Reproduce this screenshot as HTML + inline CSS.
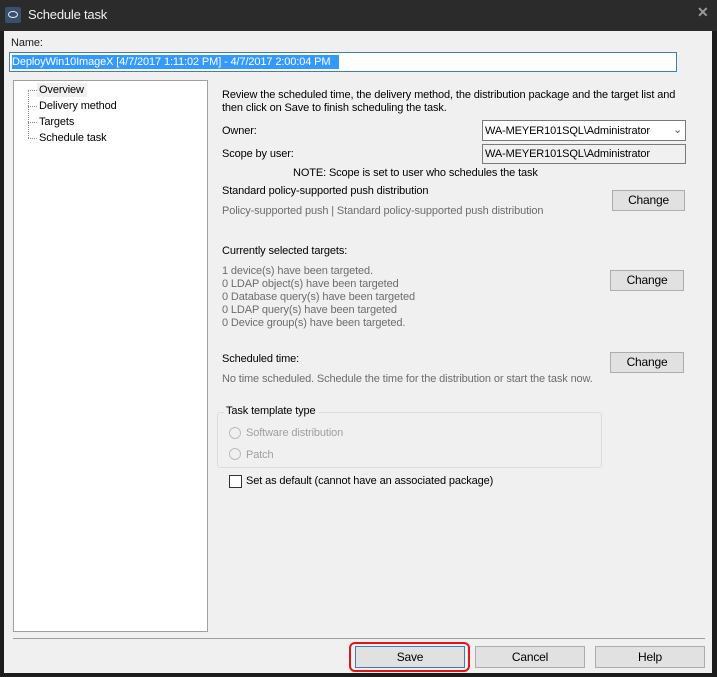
<!DOCTYPE html>
<html><head><style>
*{margin:0;padding:0;box-sizing:border-box}
body{width:717px;height:677px;background:#1c1c1c;font-family:"Liberation Sans",sans-serif;font-size:11px;letter-spacing:-0.12px;color:#000;position:relative;overflow:hidden}
.a{position:absolute;white-space:nowrap}
.g{color:#6d6d6d}
.btn{position:absolute;background:#e1e1e1;border:1px solid #adadad;text-align:center;font-size:12px;letter-spacing:-0.2px}
</style></head><body>
<div class="a" style="left:0;top:0;width:717px;height:31px;background:#2b2b2b"></div>
<div class="a" style="left:5px;top:7px;width:16px;height:16px;background:#3a4e6e;border-radius:2px"></div>
<div class="a" style="left:8px;top:11px;width:10px;height:7px;border:1.5px solid #e8eef8;border-radius:50%"></div>
<div class="a" style="left:28px;top:7px;color:#f0f0f0;font-size:13px;letter-spacing:-0.2px">Schedule task</div>
<div class="a" style="left:697px;top:4px;color:#9a9a9a;font-size:14px;font-weight:bold">✕</div>
<div class="a" style="left:4px;top:31px;width:708px;height:642px;background:#f0f0f0"></div>
<div class="a" style="left:11px;top:37px;color:#1a1a1a">Name:</div>
<div class="a" style="left:9px;top:52px;width:668px;height:20px;background:#fff;border:1px solid #3c7fb1"></div>
<div class="a" style="left:12px;top:55px;height:14px;width:327px;background:#3399ff"></div>
<div class="a" style="left:12px;top:55px;color:#fff;line-height:14px">DeployWin10ImageX [4/7/2017 1:11:02 PM] - 4/7/2017 2:00:04 PM</div>
<div class="a" style="left:13px;top:80px;width:195px;height:552px;background:#fff;border:1px solid #a0a0a0"></div>
<div class="a" style="left:28px;top:90px;width:1px;height:48px;border-left:1px dotted #888"></div>
<div class="a" style="left:28px;top:90px;width:9px;border-top:1px dotted #888"></div>
<div class="a" style="left:28px;top:106px;width:9px;border-top:1px dotted #888"></div>
<div class="a" style="left:28px;top:122px;width:9px;border-top:1px dotted #888"></div>
<div class="a" style="left:28px;top:138px;width:9px;border-top:1px dotted #888"></div>
<div class="a" style="left:37px;top:83px;width:50px;height:14px;background:#f0f0f0"></div>
<div class="a" style="left:39px;top:84px">Overview</div>
<div class="a" style="left:39px;top:100px">Delivery method</div>
<div class="a" style="left:39px;top:116px">Targets</div>
<div class="a" style="left:39px;top:132px">Schedule task</div>
<div class="a" style="left:222px;top:89px">Review the scheduled time, the delivery method, the distribution package and the target list and</div>
<div class="a" style="left:222px;top:102px">then click on Save to finish scheduling the task.</div>
<div class="a" style="left:222px;top:125px">Owner:</div>
<div class="a" style="left:482px;top:120px;width:204px;height:21px;background:#fff;border:1px solid #7a7a7a"></div>
<div class="a" style="left:485px;top:125px">WA-MEYER101SQL\Administrator</div>
<div class="a" style="left:673px;top:123px;color:#555;font-size:11px">⌄</div>
<div class="a" style="left:222px;top:148px">Scope by user:</div>
<div class="a" style="left:482px;top:144px;width:204px;height:20px;background:#f0f0f0;border:1px solid #7a7a7a"></div>
<div class="a" style="left:485px;top:148px">WA-MEYER101SQL\Administrator</div>
<div class="a" style="left:293px;top:167px">NOTE: Scope is set to user who schedules the task</div>
<div class="a" style="left:222px;top:185px">Standard policy-supported push distribution</div>
<div class="a g" style="left:222px;top:205px">Policy-supported push | Standard policy-supported push distribution</div>
<div class="btn" style="left:612px;top:190px;width:73px;height:21px;line-height:19px">Change</div>
<div class="a" style="left:222px;top:245px">Currently selected targets:</div>
<div class="a g" style="left:222px;top:265px;line-height:13px">1 device(s) have been targeted.<br>0 LDAP object(s) have been targeted<br>0 Database query(s) have been targeted<br>0 LDAP query(s) have been targeted<br>0 Device group(s) have been targeted.</div>
<div class="btn" style="left:610px;top:270px;width:74px;height:21px;line-height:19px">Change</div>
<div class="a" style="left:222px;top:353px">Scheduled time:</div>
<div class="a g" style="left:222px;top:373px">No time scheduled. Schedule the time for the distribution or start the task now.</div>
<div class="btn" style="left:610px;top:352px;width:74px;height:21px;line-height:19px">Change</div>
<div class="a" style="left:217px;top:412px;width:385px;height:56px;border:1px solid #dcdcdc;border-radius:3px"></div>
<div class="a" style="left:224px;top:405px;background:#f0f0f0;padding:0 2px">Task template type</div>
<div class="a" style="left:229px;top:427px;width:12px;height:12px;border:1px solid #bcbcbc;border-radius:50%"></div>
<div class="a" style="left:246px;top:427px;color:#a0a0a0">Software distribution</div>
<div class="a" style="left:229px;top:448px;width:12px;height:12px;border:1px solid #bcbcbc;border-radius:50%"></div>
<div class="a" style="left:246px;top:449px;color:#a0a0a0">Patch</div>
<div class="a" style="left:229px;top:475px;width:13px;height:13px;background:#fff;border:1px solid #333"></div>
<div class="a" style="left:246px;top:475px">Set as default (cannot have an associated package)</div>
<div class="a" style="left:13px;top:638px;width:692px;height:1px;background:#a0a0a0"></div>
<div class="a" style="left:349px;top:642px;width:121px;height:30px;border:2px solid #e0151c;border-radius:6px"></div>
<div class="btn" style="left:355px;top:646px;width:110px;height:22px;line-height:20px;border-color:#3c7fb1">Save</div>
<div class="btn" style="left:475px;top:646px;width:110px;height:22px;line-height:20px">Cancel</div>
<div class="btn" style="left:595px;top:646px;width:110px;height:22px;line-height:20px">Help</div>
</body></html>
